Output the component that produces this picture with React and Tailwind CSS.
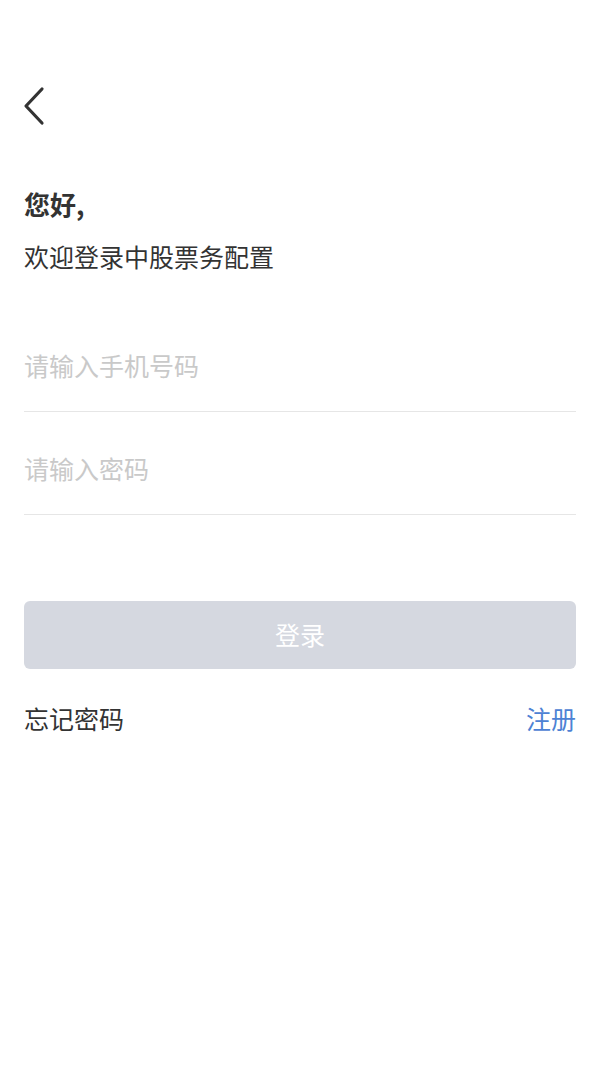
import { useState } from 'react';

export default function App() {
  const [phone, setPhone] = useState('');
  const [pwd, setPwd] = useState('');

  return (
    <div className="min-h-[1067px] bg-white px-6 font-['Noto_Sans_CJK_SC','Noto_Sans',sans-serif] text-[#333]">
      {/* back */}
      <div className="pt-[86px]">
        <svg width="24" height="40" viewBox="0 0 24 40" className="-ml-[2px]">
          <path d="M20 3 L4 20 L20 37" fill="none" stroke="#333" strokeWidth="3.2" strokeLinecap="round" strokeLinejoin="round" />
        </svg>
      </div>

      <div className="mt-[60px] text-[26px] font-bold leading-[36px]">您好,</div>
      <div className="mt-[17px] text-[25px] leading-[34px]">欢迎登录中股票务配置</div>

      {/* fields */}
      <div className="mt-[36px]">
        <div className="h-[103px] border-b border-[#e6e6e6] pt-[39px]">
          <input
            value={phone}
            onChange={e => setPhone(e.target.value)}
            placeholder="请输入手机号码"
            className="w-full text-[25px] leading-[34px] h-[34px] outline-none placeholder:text-[#c9c9c9]"
          />
        </div>
        <div className="h-[103px] border-b border-[#e6e6e6] pt-[39px]">
          <input
            type="password"
            value={pwd}
            onChange={e => setPwd(e.target.value)}
            placeholder="请输入密码"
            className="w-full text-[25px] leading-[34px] h-[34px] outline-none placeholder:text-[#c9c9c9]"
          />
        </div>
      </div>

      <button className="mt-[86px] w-full h-[68px] rounded-[6px] bg-[#d5d8e0] text-white text-[25px]">
        登录
      </button>

      <div className="mt-[32px] flex items-center justify-between text-[25px] leading-[34px]">
        <span>忘记密码</span>
        <span className="text-[#4d82d4]">注册</span>
      </div>
    </div>
  );
}
